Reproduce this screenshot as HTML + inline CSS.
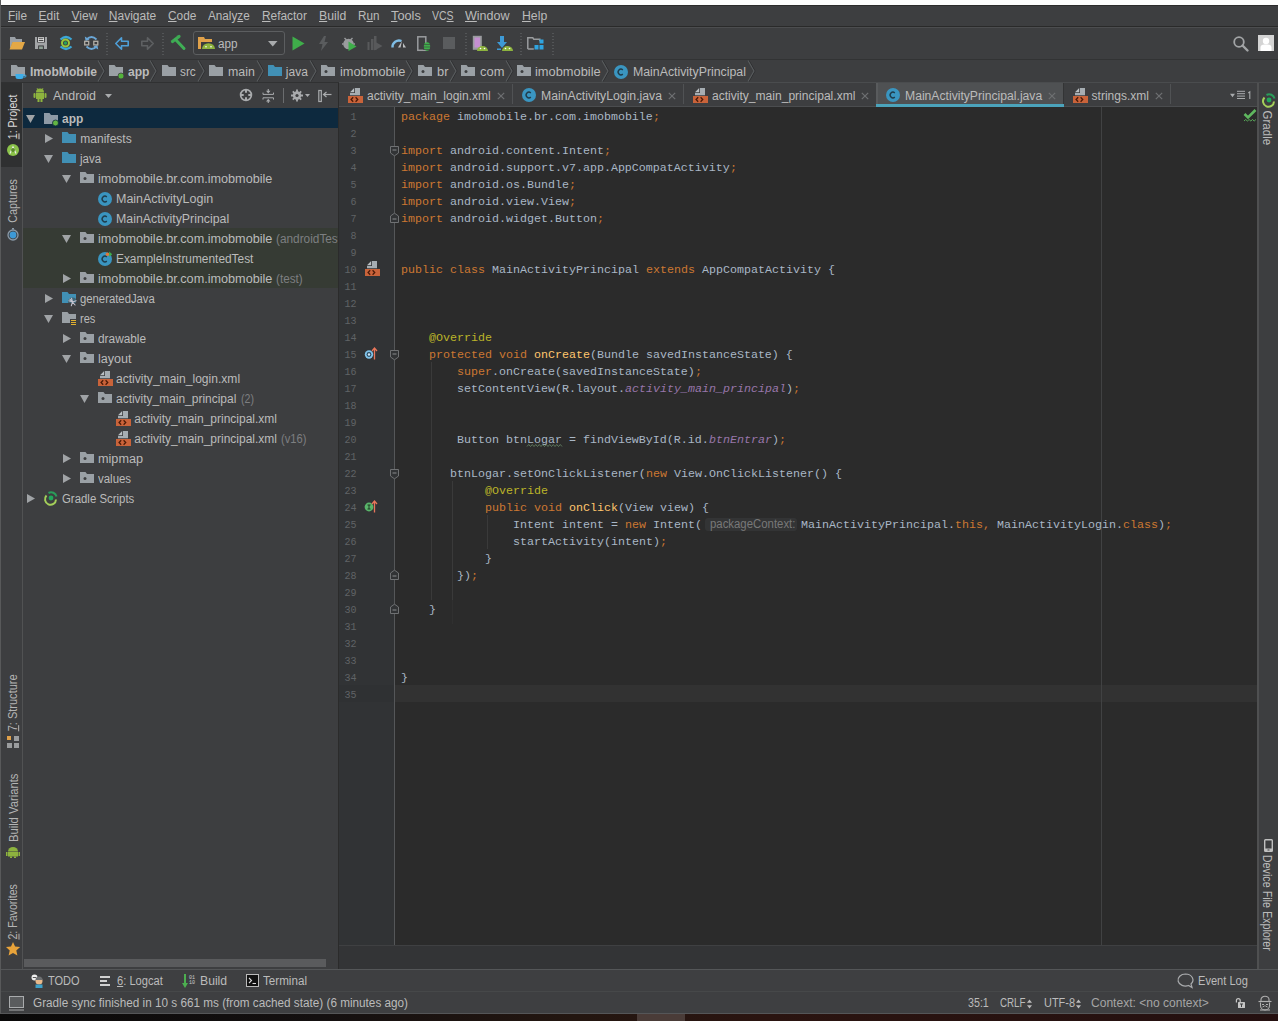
<!DOCTYPE html>
<html><head><meta charset="utf-8">
<style>
*{margin:0;padding:0;box-sizing:border-box}
html,body{width:1278px;height:1021px;overflow:hidden;background:#3d3e40;font-family:"Liberation Sans",sans-serif;color:#bbbbbb}
.a{position:absolute}
svg.a{overflow:visible}
u{text-decoration:underline;text-underline-offset:1px}
</style></head><body>
<div class="a" style="left:0px;top:0px;width:1278px;height:5px;background:#fdfdfd;"></div>
<div class="a" style="left:0px;top:5px;width:1278px;height:1px;background:#2b2b2b;"></div>
<div class="a" style="left:0px;top:6px;width:1278px;height:20px;background:#3d3e40;"></div>
<div class="a" style="left:0px;top:26px;width:1278px;height:1px;background:#2a2a2a;"></div>
<div class="a" style="left:0px;top:27px;width:1278px;height:1px;background:#4c4d4f;"></div>
<div class="a" style="left:0px;top:28px;width:1278px;height:30px;background:#3d3e40;"></div>
<div class="a" style="left:0px;top:59px;width:1278px;height:1px;background:#323334;"></div>
<div class="a" style="left:0px;top:60px;width:1278px;height:22px;background:#3d3e40;"></div>
<div class="a" style="left:0px;top:82px;width:339px;height:1px;background:#303132;"></div>
<div class="a" style="left:339px;top:82px;width:939px;height:1px;background:#4a4c4e;"></div>
<div class="a" style="left:1px;top:83px;width:21px;height:886px;background:#3d3e40;"></div>
<div class="a" style="left:1px;top:83px;width:21px;height:84px;background:#2f3031;"></div>
<div class="a" style="left:22px;top:83px;width:1px;height:886px;background:#515253;"></div>
<div class="a" style="left:23px;top:83px;width:315px;height:886px;background:#3d3e40;"></div>
<div class="a" style="left:338px;top:83px;width:1px;height:886px;background:#2b2b2b;"></div>
<div class="a" style="left:339px;top:83px;width:918px;height:24px;background:#3d3e40;"></div>
<div class="a" style="left:339px;top:107px;width:56px;height:838px;background:#313335;"></div>
<div class="a" style="left:395px;top:107px;width:862px;height:838px;background:#2b2b2b;"></div>
<div class="a" style="left:339px;top:946px;width:918px;height:23px;background:#333436;"></div>
<div class="a" style="left:339px;top:945px;width:918px;height:1px;background:#3f4042;"></div>
<div class="a" style="left:1257px;top:83px;width:2px;height:886px;background:#4f5051;"></div>
<div class="a" style="left:1259px;top:83px;width:19px;height:886px;background:#3d3e40;"></div>
<div class="a" style="left:0px;top:969px;width:1278px;height:1px;background:#545658;"></div>
<div class="a" style="left:0px;top:970px;width:1278px;height:21px;background:#3e3f41;"></div>
<div class="a" style="left:0px;top:991px;width:1278px;height:1px;background:#464849;"></div>
<div class="a" style="left:0px;top:992px;width:1278px;height:21px;background:#3e3f41;"></div>
<div class="a" style="left:0px;top:1013px;width:1278px;height:1px;background:#555658;"></div>
<div class="a" style="left:0;top:1014px;width:1278px;height:7px;background:linear-gradient(90deg,#0a0909 0%,#141010 25%,#231610 45%,#2a1410 60%,#241010 100%)"></div>
<div class="a" style="left:637px;top:1014px;width:48px;height:7px;background:#4a3c38;"></div>
<div class="a" style="left:0px;top:0px;width:1px;height:1014px;background:#58595a;"></div>
<div class="a" style="left:7.50px;top:9.84px;white-space:pre;font-family:'Liberation Sans';font-size:12px;line-height:12.0px;color:#bbbbbb;transform:scaleX(0.9822);transform-origin:0 0;"><u>F</u>ile</div>
<div class="a" style="left:38.60px;top:9.84px;white-space:pre;font-family:'Liberation Sans';font-size:12px;line-height:12.0px;color:#bbbbbb;"><u>E</u>dit</div>
<div class="a" style="left:71.50px;top:9.84px;white-space:pre;font-family:'Liberation Sans';font-size:12px;line-height:12.0px;color:#bbbbbb;"><u>V</u>iew</div>
<div class="a" style="left:108.80px;top:9.84px;white-space:pre;font-family:'Liberation Sans';font-size:12px;line-height:12.0px;color:#bbbbbb;"><u>N</u>avigate</div>
<div class="a" style="left:167.90px;top:9.84px;white-space:pre;font-family:'Liberation Sans';font-size:12px;line-height:12.0px;color:#bbbbbb;transform:scaleX(0.9900);transform-origin:0 0;"><u>C</u>ode</div>
<div class="a" style="left:208.30px;top:9.84px;white-space:pre;font-family:'Liberation Sans';font-size:12px;line-height:12.0px;color:#bbbbbb;transform:scaleX(0.9765);transform-origin:0 0;">Analy<u>z</u>e</div>
<div class="a" style="left:261.70px;top:9.84px;white-space:pre;font-family:'Liberation Sans';font-size:12px;line-height:12.0px;color:#bbbbbb;transform:scaleX(0.9899);transform-origin:0 0;"><u>R</u>efactor</div>
<div class="a" style="left:318.70px;top:9.84px;white-space:pre;font-family:'Liberation Sans';font-size:12px;line-height:12.0px;color:#bbbbbb;transform:scaleX(1.0192);transform-origin:0 0;"><u>B</u>uild</div>
<div class="a" style="left:357.70px;top:9.84px;white-space:pre;font-family:'Liberation Sans';font-size:12px;line-height:12.0px;color:#bbbbbb;transform:scaleX(0.9720);transform-origin:0 0;">R<u>u</u>n</div>
<div class="a" style="left:390.50px;top:9.84px;white-space:pre;font-family:'Liberation Sans';font-size:12px;line-height:12.0px;color:#bbbbbb;transform:scaleX(1.0637);transform-origin:0 0;"><u>T</u>ools</div>
<div class="a" style="left:431.70px;top:9.84px;white-space:pre;font-family:'Liberation Sans';font-size:12px;line-height:12.0px;color:#bbbbbb;transform:scaleX(0.8749);transform-origin:0 0;">VC<u>S</u></div>
<div class="a" style="left:464.50px;top:9.84px;white-space:pre;font-family:'Liberation Sans';font-size:12px;line-height:12.0px;color:#bbbbbb;transform:scaleX(1.0448);transform-origin:0 0;"><u>W</u>indow</div>
<div class="a" style="left:521.50px;top:9.84px;white-space:pre;font-family:'Liberation Sans';font-size:12px;line-height:12.0px;color:#bbbbbb;transform:scaleX(1.0208);transform-origin:0 0;"><u>H</u>elp</div>
<svg class="a" style="left:9px;top:37px" width="16" height="13" viewBox="0 0 16 13"><path d="M1 0h5l1 2h6v3H4L1 12z" fill="#9aa0a6"/><path d="M3.5 5H16l-3 7.5H0.5z" fill="#e3a846"/></svg>
<svg class="a" style="left:35px;top:37px" width="12" height="12" viewBox="0 0 12 12"><rect width="12" height="12" fill="#a3a5a7"/><rect x="2.2" y="-0.3" width="7.6" height="5.8" fill="#2e2f31"/><rect x="3" y="0.3" width="6" height="4.5" fill="#f4f4f4"/><rect x="3.6" y="1.3" width="4.8" height="0.9" fill="#333"/><rect x="3.6" y="3" width="4.8" height="0.9" fill="#333"/><rect x="3.2" y="8.5" width="5.6" height="3.5" fill="#2e2f31"/><rect x="4.1" y="9.4" width="3.8" height="2.6" fill="#8fa096"/></svg>
<svg class="a" style="left:59px;top:35px" width="14" height="16" viewBox="0 0 14 16"><path d="M1.5 4.5Q7 -0.5 12.5 4.5" stroke="#3ba7d8" stroke-width="2.2" fill="none"/><path d="M1.5 11.5Q7 16.5 12.5 11.5" stroke="#3ba7d8" stroke-width="2.2" fill="none"/><circle cx="6.5" cy="8" r="3.5" stroke="#9cc53a" stroke-width="2" fill="none"/><circle cx="6.5" cy="8" r="1.7" fill="#27a35a"/></svg>
<svg class="a" style="left:84px;top:35px" width="15" height="16" viewBox="0 0 15 16"><path d="M2.5 4.5Q7.5 -0.5 12.5 4.5" stroke="#6aa6d6" stroke-width="1.8" fill="none"/><path d="M0.8 1.5l0.8 4.5 4-1.5z" fill="#6aa6d6"/><path d="M2.5 11.5Q7.5 16.5 12.5 11.5" stroke="#6aa6d6" stroke-width="1.8" fill="none"/><path d="M14.2 14.5l-0.8-4.5-4 1.5z" fill="#6aa6d6"/><rect x="0.7" y="6.3" width="4" height="3.6" fill="#3d3e40" stroke="#b3afa8" stroke-width="1.3"/><rect x="9.8" y="6.3" width="4" height="3.6" fill="#3d3e40" stroke="#b3afa8" stroke-width="1.3"/></svg>
<svg class="a" style="left:106px;top:33px" width="2" height="22" viewBox="0 0 2 22"><rect x="0.5" y="0" width="1" height="1" fill="#6b6d6f"/><rect x="0.5" y="3" width="1" height="1" fill="#6b6d6f"/><rect x="0.5" y="6" width="1" height="1" fill="#6b6d6f"/><rect x="0.5" y="9" width="1" height="1" fill="#6b6d6f"/><rect x="0.5" y="12" width="1" height="1" fill="#6b6d6f"/><rect x="0.5" y="15" width="1" height="1" fill="#6b6d6f"/><rect x="0.5" y="18" width="1" height="1" fill="#6b6d6f"/><rect x="0.5" y="21" width="1" height="1" fill="#6b6d6f"/></svg>
<svg class="a" style="left:162px;top:33px" width="2" height="22" viewBox="0 0 2 22"><rect x="0.5" y="0" width="1" height="1" fill="#6b6d6f"/><rect x="0.5" y="3" width="1" height="1" fill="#6b6d6f"/><rect x="0.5" y="6" width="1" height="1" fill="#6b6d6f"/><rect x="0.5" y="9" width="1" height="1" fill="#6b6d6f"/><rect x="0.5" y="12" width="1" height="1" fill="#6b6d6f"/><rect x="0.5" y="15" width="1" height="1" fill="#6b6d6f"/><rect x="0.5" y="18" width="1" height="1" fill="#6b6d6f"/><rect x="0.5" y="21" width="1" height="1" fill="#6b6d6f"/></svg>
<svg class="a" style="left:465px;top:33px" width="2" height="22" viewBox="0 0 2 22"><rect x="0.5" y="0" width="1" height="1" fill="#6b6d6f"/><rect x="0.5" y="3" width="1" height="1" fill="#6b6d6f"/><rect x="0.5" y="6" width="1" height="1" fill="#6b6d6f"/><rect x="0.5" y="9" width="1" height="1" fill="#6b6d6f"/><rect x="0.5" y="12" width="1" height="1" fill="#6b6d6f"/><rect x="0.5" y="15" width="1" height="1" fill="#6b6d6f"/><rect x="0.5" y="18" width="1" height="1" fill="#6b6d6f"/><rect x="0.5" y="21" width="1" height="1" fill="#6b6d6f"/></svg>
<svg class="a" style="left:520px;top:33px" width="2" height="22" viewBox="0 0 2 22"><rect x="0.5" y="0" width="1" height="1" fill="#6b6d6f"/><rect x="0.5" y="3" width="1" height="1" fill="#6b6d6f"/><rect x="0.5" y="6" width="1" height="1" fill="#6b6d6f"/><rect x="0.5" y="9" width="1" height="1" fill="#6b6d6f"/><rect x="0.5" y="12" width="1" height="1" fill="#6b6d6f"/><rect x="0.5" y="15" width="1" height="1" fill="#6b6d6f"/><rect x="0.5" y="18" width="1" height="1" fill="#6b6d6f"/><rect x="0.5" y="21" width="1" height="1" fill="#6b6d6f"/></svg>
<svg class="a" style="left:552px;top:33px" width="2" height="22" viewBox="0 0 2 22"><rect x="0.5" y="0" width="1" height="1" fill="#6b6d6f"/><rect x="0.5" y="3" width="1" height="1" fill="#6b6d6f"/><rect x="0.5" y="6" width="1" height="1" fill="#6b6d6f"/><rect x="0.5" y="9" width="1" height="1" fill="#6b6d6f"/><rect x="0.5" y="12" width="1" height="1" fill="#6b6d6f"/><rect x="0.5" y="15" width="1" height="1" fill="#6b6d6f"/><rect x="0.5" y="18" width="1" height="1" fill="#6b6d6f"/><rect x="0.5" y="21" width="1" height="1" fill="#6b6d6f"/></svg>
<svg class="a" style="left:115px;top:37px" width="14" height="13" viewBox="0 0 14 13"><path d="M0.8 6.5L6.5 0.8v3.4h6.7v4.6H6.5v3.4z" fill="none" stroke="#4e9fd8" stroke-width="1.6" stroke-linejoin="round"/></svg>
<svg class="a" style="left:141px;top:37px" width="13" height="13" viewBox="0 0 13 13"><path d="M12.2 6.5L6.5 0.8v3.4H0.8v4.6h5.7v3.4z" fill="none" stroke="#5e6062" stroke-width="1.6" stroke-linejoin="round"/></svg>
<svg class="a" style="left:168px;top:34px" width="20" height="18" viewBox="0 0 20 18"><path d="M4.5 7.5L11 2.5" stroke="#3da953" stroke-width="3.2" stroke-linecap="round"/><path d="M7.5 5.5L16 14.5" stroke="#3fae55" stroke-width="3" stroke-linecap="round"/></svg>
<div class="a" style="left:193px;top:31px;width:92px;height:24px;border:1px solid #5c5e60;border-radius:3px;background:#3b3c3e"></div>
<svg class="a" style="left:198px;top:37px" width="18" height="13" viewBox="0 0 18 13"><path d="M0 0h6l1 2h7v3H2v7H0z" fill="#e0a14a"/><rect x="1.5" y="3" width="1.5" height="9" fill="#e0a14a"/><path d="M4 12a5 4.5 0 0 1 13 0z" fill="#8db33e"/><circle cx="8" cy="9.8" r="0.8" fill="#fff"/><circle cx="13" cy="9.8" r="0.8" fill="#fff"/></svg>
<div class="a" style="left:217.80px;top:37.84px;white-space:pre;font-family:'Liberation Sans';font-size:12px;line-height:12.0px;color:#bbbbbb;transform:scaleX(0.9735);transform-origin:0 0;">app</div>
<svg class="a" style="left:268px;top:41px" width="10" height="6" viewBox="0 0 10 6"><path d="M0 0h9.5L4.75 5.5z" fill="#a9abad"/></svg>
<svg class="a" style="left:292px;top:36px" width="13" height="15" viewBox="0 0 13 15"><path d="M0.5 0.5L12.5 7.5 0.5 14.5z" fill="#3fae4a"/></svg>
<svg class="a" style="left:319px;top:36px" width="9" height="15" viewBox="0 0 9 15"><path d="M5 0L0 8h3.5L2 15 9 6H5.5L7 0z" fill="#5a5c5e"/></svg>
<svg class="a" style="left:342px;top:36px" width="15" height="15" viewBox="0 0 15 15"><circle cx="6.5" cy="8" r="5.3" fill="#9a9c9e"/><path d="M2.5 2l2 2M10.5 2l-2 2M0 8h1.5M11.5 8h1.5" stroke="#9a9c9e" stroke-width="1.4"/><path d="M6.5 5.5L14.5 10.5 6.5 15z" fill="#3fae4a"/></svg>
<svg class="a" style="left:367px;top:36px" width="16" height="15" viewBox="0 0 16 15"><rect x="0.5" y="6" width="2" height="8" fill="#58595b"/><rect x="4" y="3" width="2.5" height="11" fill="#58595b"/><rect x="7" y="0" width="2.5" height="14" fill="#58595b"/><path d="M7.5 5.5L15.5 10 7.5 14.5z" fill="#58595b"/></svg>
<svg class="a" style="left:391px;top:38px" width="16" height="10" viewBox="0 0 16 10"><path d="M1.5 9.5a6.5 6.5 0 0 1 9-6.5" stroke="#7fbde5" stroke-width="2.4" fill="none"/><path d="M7 9.5L11 3l-1.5 6.5z" fill="#bdbfc1"/><path d="M12 5l3 4.5h-3z" fill="#bdbfc1"/></svg>
<svg class="a" style="left:417px;top:36px" width="14" height="15" viewBox="0 0 14 15"><rect x="0.8" y="0.8" width="8" height="13.5" fill="none" stroke="#9a9c9e" stroke-width="1.5"/><ellipse cx="10" cy="10.5" rx="3.2" ry="4.2" fill="#3fae4a"/><path d="M6 8.5h8M6 11h8M6 13.5h8" stroke="#3d3e40" stroke-width="0.6"/></svg>
<div class="a" style="left:443px;top:37px;width:12px;height:12px;background:#5a5c5e;"></div>
<svg class="a" style="left:472px;top:35px" width="16" height="16" viewBox="0 0 16 16"><rect x="0.8" y="0.8" width="9" height="14" fill="#9a9c9e"/><rect x="2.5" y="2.5" width="5.6" height="10" fill="#c48fd0"/><path d="M5 16a5.5 5 0 0 1 11 0z" fill="#8db33e"/><circle cx="8.5" cy="13.5" r="0.8" fill="#fff"/><circle cx="12.5" cy="13.5" r="0.8" fill="#fff"/></svg>
<svg class="a" style="left:497px;top:36px" width="16" height="15" viewBox="0 0 16 15"><rect x="3" y="0" width="4" height="7" fill="#3e9ad6"/><path d="M0 6h10L5 12z" fill="#3e9ad6"/><rect x="0" y="12.5" width="4" height="1.5" fill="#3e9ad6"/><path d="M5 15a5.5 5 0 0 1 11 0z" fill="#8db33e"/><circle cx="8.5" cy="12.5" r="0.8" fill="#fff"/><circle cx="12.5" cy="12.5" r="0.8" fill="#fff"/></svg>
<svg class="a" style="left:527px;top:37px" width="17" height="13" viewBox="0 0 17 13"><path d="M0.8 12V0.8h5l1 1.5h6v2" fill="none" stroke="#9a9c9e" stroke-width="1.5"/><path d="M0.8 12h6" stroke="#9a9c9e" stroke-width="1.5"/><rect x="12.5" y="2.5" width="4" height="4" fill="#2fa4e0"/><rect x="7.5" y="8" width="4" height="4.5" fill="#2fa4e0"/><rect x="12.5" y="8" width="4" height="4.5" fill="#2fa4e0"/></svg>
<svg class="a" style="left:1233px;top:36px" width="16" height="16" viewBox="0 0 16 16"><circle cx="6" cy="6" r="4.8" stroke="#a2a4a6" stroke-width="1.8" fill="none"/><path d="M9.5 9.5l5 5" stroke="#a2a4a6" stroke-width="2.4" stroke-linecap="round"/></svg>
<svg class="a" style="left:1258px;top:35px" width="16" height="16" viewBox="0 0 16 16"><rect width="16" height="16" fill="#d4d4d4"/><circle cx="8" cy="6" r="3.2" fill="#fff"/><path d="M2.5 16v-3.5a4 3 0 0 1 4-3h3a4 3 0 0 1 4 3V16z" fill="#fff"/></svg>
<svg class="a" style="left:11px;top:65px" width="16" height="14" viewBox="0 0 16 14"><path d="M0 0h5.5l1.5 2H14v9H0z" fill="#9aa0a5"/><path d="M4.5 9h8v2.5a2.5 2.5 0 0 1-2.5 2.5h-3a2.5 2.5 0 0 1-2.5-2.5z" fill="#3daee9"/><path d="M12.5 10h1.5a1 1 0 0 1 0 2h-1.5" stroke="#3daee9" stroke-width="1" fill="none"/></svg>
<div class="a" style="left:30.00px;top:66.34px;white-space:pre;font-family:'Liberation Sans';font-size:12px;line-height:12.0px;color:#bbbbbb;font-weight:bold;transform:scaleX(1.0064);transform-origin:0 0;">ImobMobile</div>
<svg class="a" style="left:97px;top:59px" width="9" height="24" viewBox="0 0 9 24"><path d="M2 1.5L8 12 2 22.5" stroke="#2c2d2f" stroke-width="1" fill="none"/><path d="M1 1.5L7 12 1 22.5" stroke="#595c5e" stroke-width="1.1" fill="none"/></svg>
<svg class="a" style="left:109px;top:65px" width="16" height="14" viewBox="0 0 16 14"><path d="M0 0h5.5l1.5 2H14V11H0z" fill="#9aa0a5"/><circle cx="12" cy="11" r="3" fill="#53b33a" stroke="#3d3e40" stroke-width="0.8"/></svg>
<div class="a" style="left:127.80px;top:66.34px;white-space:pre;font-family:'Liberation Sans';font-size:12px;line-height:12.0px;color:#bbbbbb;font-weight:bold;transform:scaleX(1.0073);transform-origin:0 0;">app</div>
<svg class="a" style="left:149px;top:59px" width="9" height="24" viewBox="0 0 9 24"><path d="M2 1.5L8 12 2 22.5" stroke="#2c2d2f" stroke-width="1" fill="none"/><path d="M1 1.5L7 12 1 22.5" stroke="#595c5e" stroke-width="1.1" fill="none"/></svg>
<svg class="a" style="left:162px;top:65px" width="14" height="11" viewBox="0 0 14 11"><path d="M0 0h5.5l1.5 2H14V11H0z" fill="#9aa0a5"/></svg>
<div class="a" style="left:180.30px;top:66.34px;white-space:pre;font-family:'Liberation Sans';font-size:12px;line-height:12.0px;color:#bbbbbb;transform:scaleX(0.9875);transform-origin:0 0;">src</div>
<svg class="a" style="left:197px;top:59px" width="9" height="24" viewBox="0 0 9 24"><path d="M2 1.5L8 12 2 22.5" stroke="#2c2d2f" stroke-width="1" fill="none"/><path d="M1 1.5L7 12 1 22.5" stroke="#595c5e" stroke-width="1.1" fill="none"/></svg>
<svg class="a" style="left:209px;top:65px" width="14" height="11" viewBox="0 0 14 11"><path d="M0 0h5.5l1.5 2H14V11H0z" fill="#9aa0a5"/></svg>
<div class="a" style="left:227.90px;top:66.34px;white-space:pre;font-family:'Liberation Sans';font-size:12px;line-height:12.0px;color:#bbbbbb;transform:scaleX(1.0302);transform-origin:0 0;">main</div>
<svg class="a" style="left:256px;top:59px" width="9" height="24" viewBox="0 0 9 24"><path d="M2 1.5L8 12 2 22.5" stroke="#2c2d2f" stroke-width="1" fill="none"/><path d="M1 1.5L7 12 1 22.5" stroke="#595c5e" stroke-width="1.1" fill="none"/></svg>
<svg class="a" style="left:268px;top:65px" width="14" height="11" viewBox="0 0 14 11"><path d="M0 0h5.5l1.5 2H14V11H0z" fill="#4190b5"/></svg>
<div class="a" style="left:285.80px;top:66.34px;white-space:pre;font-family:'Liberation Sans';font-size:12px;line-height:12.0px;color:#bbbbbb;">java</div>
<svg class="a" style="left:309px;top:59px" width="9" height="24" viewBox="0 0 9 24"><path d="M2 1.5L8 12 2 22.5" stroke="#2c2d2f" stroke-width="1" fill="none"/><path d="M1 1.5L7 12 1 22.5" stroke="#595c5e" stroke-width="1.1" fill="none"/></svg>
<svg class="a" style="left:321px;top:65px" width="14" height="11" viewBox="0 0 14 11"><path d="M0 0h5.5l1.5 2H14V11H0z" fill="#9aa0a5"/><circle cx="5" cy="6.5" r="1.5" fill="#3d3e40"/></svg>
<div class="a" style="left:339.70px;top:66.34px;white-space:pre;font-family:'Liberation Sans';font-size:12px;line-height:12.0px;color:#bbbbbb;transform:scaleX(1.0659);transform-origin:0 0;">imobmobile</div>
<svg class="a" style="left:405px;top:59px" width="9" height="24" viewBox="0 0 9 24"><path d="M2 1.5L8 12 2 22.5" stroke="#2c2d2f" stroke-width="1" fill="none"/><path d="M1 1.5L7 12 1 22.5" stroke="#595c5e" stroke-width="1.1" fill="none"/></svg>
<svg class="a" style="left:418px;top:65px" width="14" height="11" viewBox="0 0 14 11"><path d="M0 0h5.5l1.5 2H14V11H0z" fill="#9aa0a5"/><circle cx="5" cy="6.5" r="1.5" fill="#3d3e40"/></svg>
<div class="a" style="left:436.90px;top:66.34px;white-space:pre;font-family:'Liberation Sans';font-size:12px;line-height:12.0px;color:#bbbbbb;transform:scaleX(1.0682);transform-origin:0 0;">br</div>
<svg class="a" style="left:449px;top:59px" width="9" height="24" viewBox="0 0 9 24"><path d="M2 1.5L8 12 2 22.5" stroke="#2c2d2f" stroke-width="1" fill="none"/><path d="M1 1.5L7 12 1 22.5" stroke="#595c5e" stroke-width="1.1" fill="none"/></svg>
<svg class="a" style="left:461px;top:65px" width="14" height="11" viewBox="0 0 14 11"><path d="M0 0h5.5l1.5 2H14V11H0z" fill="#9aa0a5"/><circle cx="5" cy="6.5" r="1.5" fill="#3d3e40"/></svg>
<div class="a" style="left:479.70px;top:66.34px;white-space:pre;font-family:'Liberation Sans';font-size:12px;line-height:12.0px;color:#bbbbbb;transform:scaleX(1.0762);transform-origin:0 0;">com</div>
<svg class="a" style="left:505px;top:59px" width="9" height="24" viewBox="0 0 9 24"><path d="M2 1.5L8 12 2 22.5" stroke="#2c2d2f" stroke-width="1" fill="none"/><path d="M1 1.5L7 12 1 22.5" stroke="#595c5e" stroke-width="1.1" fill="none"/></svg>
<svg class="a" style="left:517px;top:65px" width="14" height="11" viewBox="0 0 14 11"><path d="M0 0h5.5l1.5 2H14V11H0z" fill="#9aa0a5"/><circle cx="5" cy="6.5" r="1.5" fill="#3d3e40"/></svg>
<div class="a" style="left:535.30px;top:66.34px;white-space:pre;font-family:'Liberation Sans';font-size:12px;line-height:12.0px;color:#bbbbbb;transform:scaleX(1.0707);transform-origin:0 0;">imobmobile</div>
<svg class="a" style="left:601px;top:59px" width="9" height="24" viewBox="0 0 9 24"><path d="M2 1.5L8 12 2 22.5" stroke="#2c2d2f" stroke-width="1" fill="none"/><path d="M1 1.5L7 12 1 22.5" stroke="#595c5e" stroke-width="1.1" fill="none"/></svg>
<svg class="a" style="left:614px;top:65px" width="14" height="14" viewBox="0 0 14 14"><circle cx="7.0" cy="7.0" r="7.0" fill="#3a95c0"/><path d="M8.82 4.8999999999999995a2.8000000000000003 2.8000000000000003 0 1 0 0 4.2" stroke="#1f3b4a" stroke-width="1.4" fill="none"/></svg>
<div class="a" style="left:632.90px;top:66.34px;white-space:pre;font-family:'Liberation Sans';font-size:12px;line-height:12.0px;color:#bbbbbb;transform:scaleX(1.0259);transform-origin:0 0;">MainActivityPrincipal</div>
<svg class="a" style="left:747px;top:59px" width="9" height="24" viewBox="0 0 9 24"><path d="M2 1.5L8 12 2 22.5" stroke="#2c2d2f" stroke-width="1" fill="none"/><path d="M1 1.5L7 12 1 22.5" stroke="#595c5e" stroke-width="1.1" fill="none"/></svg>
<div class="a" style="left:-12.05px;top:111.04px;width:50.70px;height:12.0px;white-space:pre;font-family:'Liberation Sans';font-size:12px;line-height:12.0px;color:#d8d8d8;transform-origin:25.35px 5.86px;transform:rotate(-90deg) scaleX(0.8836)"><u>1</u>: Project</div>
<svg class="a" style="left:7px;top:144px" width="12" height="12" viewBox="0 0 12 12"><circle cx="6" cy="6" r="6" fill="#8bc34a"/><path d="M3 9.5L6 3l3 6.5" stroke="#eee" stroke-width="1.2" fill="none"/><circle cx="6" cy="6" r="2" fill="#5a8a2a"/></svg>
<div class="a" style="left:-11.05px;top:195.14px;width:48.70px;height:12.0px;white-space:pre;font-family:'Liberation Sans';font-size:12px;line-height:12.0px;color:#b4b4b4;transform-origin:24.35px 5.86px;transform:rotate(-90deg) scaleX(0.8952)">Captures</div>
<svg class="a" style="left:7px;top:228px" width="12" height="13" viewBox="0 0 12 13"><circle cx="6" cy="7" r="5" fill="none" stroke="#8a9aa8" stroke-width="1.3"/><circle cx="6" cy="7" r="3.4" fill="#3d9ad8"/><rect x="5" y="0" width="2" height="1.5" fill="#8a9aa8"/></svg>
<div class="a" style="left:-17.72px;top:696.79px;width:62.03px;height:12.0px;white-space:pre;font-family:'Liberation Sans';font-size:12px;line-height:12.0px;color:#b4b4b4;transform-origin:31.02px 5.86px;transform:rotate(-90deg) scaleX(0.9173)"><u>7</u>: Structure</div>
<svg class="a" style="left:7px;top:736px" width="12" height="12" viewBox="0 0 12 12"><rect x="0" y="0" width="4" height="4" fill="#e0a14a"/><rect x="7" y="0" width="5" height="5" fill="#9a9c9e"/><rect x="0" y="7" width="5" height="5" fill="#9a9c9e"/><rect x="7" y="7" width="5" height="5" fill="#9a9c9e"/></svg>
<div class="a" style="left:-23.28px;top:801.69px;width:73.16px;height:12.0px;white-space:pre;font-family:'Liberation Sans';font-size:12px;line-height:12.0px;color:#b4b4b4;transform-origin:36.58px 5.86px;transform:rotate(-90deg) scaleX(0.9364)">Build Variants</div>
<svg class="a" style="left:6px;top:846px" width="14" height="13" viewBox="0 0 14 13"><path d="M2 5.5a5 4.5 0 0 1 10 0z" fill="#8db33e"/><rect x="2" y="6" width="10" height="4.5" fill="#8db33e"/><rect x="0" y="6" width="1.5" height="4" fill="#8db33e"/><rect x="12.5" y="6" width="1.5" height="4" fill="#8db33e"/><rect x="4" y="10.5" width="2" height="1.5" fill="#8db33e"/><rect x="8" y="10.5" width="2" height="1.5" fill="#8db33e"/></svg>
<div class="a" style="left:-18.05px;top:905.69px;width:62.70px;height:12.0px;white-space:pre;font-family:'Liberation Sans';font-size:12px;line-height:12.0px;color:#b4b4b4;transform-origin:31.35px 5.86px;transform:rotate(-90deg) scaleX(0.8851)"><u>2</u>: Favorites</div>
<svg class="a" style="left:6px;top:942px" width="14" height="14" viewBox="0 0 14 14"><path d="M7 0l2.1 4.6 5 .5-3.8 3.3 1.1 5L7 10.9 2.6 13.4l1.1-5L0 5.1l5-.5z" fill="#e8a33a"/></svg>
<svg class="a" style="left:1262px;top:93px" width="14" height="14" viewBox="0 0 14 14"><path d="M2.5 4.5a5.5 5.5 0 1 0 9.5 4" stroke="#a4cf5a" stroke-width="2" fill="none"/><path d="M4.5 2a5.5 5.5 0 0 1 8 3.5" stroke="#2a9d5a" stroke-width="2" fill="none"/><circle cx="7" cy="7" r="2.4" fill="#22a85a"/></svg>
<div class="a" style="left:1248.98px;top:121.54px;width:36.03px;height:12.0px;white-space:pre;font-family:'Liberation Sans';font-size:12px;line-height:12.0px;color:#bbbbbb;transform-origin:18.02px 5.86px;transform:rotate(90deg) scaleX(0.9603)">Gradle</div>
<svg class="a" style="left:1264px;top:839px" width="9" height="13" viewBox="0 0 9 13"><rect x="0.7" y="0.7" width="7.6" height="11.6" rx="0.8" fill="none" stroke="#c0c0c0" stroke-width="1.4"/><rect x="0.7" y="9.5" width="7.6" height="2.8" fill="#c0c0c0"/><rect x="3.5" y="10.5" width="2" height="1" fill="#3d3e40"/></svg>
<div class="a" style="left:1213.31px;top:896.64px;width:107.38px;height:12.0px;white-space:pre;font-family:'Liberation Sans';font-size:12px;line-height:12.0px;color:#bbbbbb;transform-origin:53.69px 5.86px;transform:rotate(90deg) scaleX(0.8941)">Device File Explorer</div>
<svg class="a" style="left:32px;top:87px" width="16" height="16" viewBox="0 0 16 16"><path d="M4 5.5a4 4 0 0 1 8 0z" fill="#8db33e"/><path d="M5 1l1 2M11 1l-1 2" stroke="#8db33e" stroke-width="0.8"/><rect x="4" y="6" width="8" height="6" fill="#8db33e"/><rect x="1.5" y="6" width="2" height="5" rx="1" fill="#8db33e"/><rect x="12.5" y="6" width="2" height="5" rx="1" fill="#8db33e"/><rect x="5.5" y="12" width="2" height="3" fill="#8db33e"/><rect x="8.5" y="12" width="2" height="3" fill="#8db33e"/></svg>
<div class="a" style="left:52.90px;top:89.84px;white-space:pre;font-family:'Liberation Sans';font-size:12px;line-height:12.0px;color:#bbbbbb;transform:scaleX(1.0369);transform-origin:0 0;">Android</div>
<svg class="a" style="left:105px;top:94px" width="7" height="4" viewBox="0 0 7 4"><path d="M0 0h7L3.5 4z" fill="#a9abad"/></svg>
<svg class="a" style="left:239px;top:88px" width="14" height="14" viewBox="0 0 14 14"><circle cx="7" cy="7" r="5.4" stroke="#a9abad" stroke-width="1.7" fill="none"/><path d="M7 1.5v3.2M7 9.3v3.2M1.5 7h3.2M9.3 7h3.2" stroke="#a9abad" stroke-width="2"/></svg>
<svg class="a" style="left:261.5px;top:88.5px" width="13" height="14" viewBox="0 0 13 14"><path d="M1 3.6v1.8h10.5V3.6M1 10.6V8.8h10.5v1.8" stroke="#a9abad" stroke-width="1" fill="none"/><path d="M6.25 0v2.5M6.25 11.5V14" stroke="#a9abad" stroke-width="1.1"/><path d="M4 1.8h4.5L6.25 4.6zM4 12.6h4.5L6.25 9.8z" fill="#a9abad"/></svg>
<div class="a" style="left:283px;top:88px;width:1px;height:15px;background:#6b6d6f;"></div>
<svg class="a" style="left:291px;top:89px" width="20" height="13" viewBox="0 0 20 13"><circle cx="6" cy="6.5" r="4.2" fill="#a9abad"/><path d="M6 0.5v12M0 6.5h12M1.8 2.3l8.4 8.4M10.2 2.3l-8.4 8.4" stroke="#a9abad" stroke-width="1.8"/><circle cx="6" cy="6.5" r="1.6" fill="#3d3e40"/><path d="M14 5h5l-2.5 3z" fill="#a9abad"/></svg>
<svg class="a" style="left:318px;top:90px" width="14" height="12" viewBox="0 0 14 12"><rect x="0.8" y="0.5" width="2.5" height="11" fill="none" stroke="#a9abad" stroke-width="1.2"/><path d="M6 4.5h7.5" stroke="#a9abad" stroke-width="1.2"/><path d="M8.5 2L5.5 4.5 8.5 7" stroke="#a9abad" stroke-width="1.2" fill="none"/></svg>
<div class="a" style="left:23px;top:108px;width:315px;height:20px;background:#0d293e;"></div>
<div class="a" style="left:23px;top:228px;width:315px;height:60px;background:#363b34;"></div>
<svg class="a" style="left:26px;top:115px" width="9" height="8" viewBox="0 0 9 8"><path d="M0 0h9L4.5 8z" fill="#a0a3a6"/></svg>
<svg class="a" style="left:44px;top:113px" width="16" height="14" viewBox="0 0 16 14"><path d="M0 0h5.5l1.5 2H14V11H0z" fill="#8e9aa6"/><circle cx="11.5" cy="10" r="3" fill="#62b543" stroke="#0d293e" stroke-width="0.8"/></svg>
<div class="a" style="left:62.30px;top:112.84px;white-space:pre;font-family:'Liberation Sans';font-size:12px;line-height:12.0px;color:#bbbbbb;font-weight:bold;transform:scaleX(0.9933);transform-origin:0 0;">app</div>
<svg class="a" style="left:45px;top:134px" width="8" height="9" viewBox="0 0 8 9"><path d="M0 0v9L8 4.5z" fill="#a0a3a6"/></svg>
<svg class="a" style="left:62px;top:132px" width="14" height="11" viewBox="0 0 14 11"><path d="M0 0h5.5l1.5 2H14v9H0z" fill="#4190b5"/></svg>
<div class="a" style="left:80.30px;top:132.84px;white-space:pre;font-family:'Liberation Sans';font-size:12px;line-height:12.0px;color:#bbbbbb;">manifests</div>
<svg class="a" style="left:44px;top:155px" width="9" height="8" viewBox="0 0 9 8"><path d="M0 0h9L4.5 8z" fill="#a0a3a6"/></svg>
<svg class="a" style="left:62px;top:152px" width="14" height="11" viewBox="0 0 14 11"><path d="M0 0h5.5l1.5 2H14v9H0z" fill="#4190b5"/></svg>
<div class="a" style="left:80.30px;top:152.84px;white-space:pre;font-family:'Liberation Sans';font-size:12px;line-height:12.0px;color:#bbbbbb;transform:scaleX(0.9584);transform-origin:0 0;">java</div>
<svg class="a" style="left:62px;top:175px" width="9" height="8" viewBox="0 0 9 8"><path d="M0 0h9L4.5 8z" fill="#a0a3a6"/></svg>
<svg class="a" style="left:80px;top:172px" width="14" height="11" viewBox="0 0 14 11"><path d="M0 0h5.5l1.5 2H14V11H0z" fill="#9aa0a5"/><circle cx="5" cy="6.5" r="1.5" fill="#3d3e40"/></svg>
<div class="a" style="left:98.30px;top:172.84px;white-space:pre;font-family:'Liberation Sans';font-size:12px;line-height:12.0px;color:#bbbbbb;transform:scaleX(1.0544);transform-origin:0 0;">imobmobile.br.com.imobmobile</div>
<svg class="a" style="left:98px;top:192px" width="14" height="14" viewBox="0 0 14 14"><circle cx="7.0" cy="7.0" r="7.0" fill="#3a95c0"/><path d="M8.82 4.8999999999999995a2.8000000000000003 2.8000000000000003 0 1 0 0 4.2" stroke="#1f3b4a" stroke-width="1.4" fill="none"/></svg>
<div class="a" style="left:116.30px;top:192.84px;white-space:pre;font-family:'Liberation Sans';font-size:12px;line-height:12.0px;color:#bbbbbb;transform:scaleX(1.0399);transform-origin:0 0;">MainActivityLogin</div>
<svg class="a" style="left:98px;top:212px" width="14" height="14" viewBox="0 0 14 14"><circle cx="7.0" cy="7.0" r="7.0" fill="#3a95c0"/><path d="M8.82 4.8999999999999995a2.8000000000000003 2.8000000000000003 0 1 0 0 4.2" stroke="#1f3b4a" stroke-width="1.4" fill="none"/></svg>
<div class="a" style="left:116.30px;top:212.84px;white-space:pre;font-family:'Liberation Sans';font-size:12px;line-height:12.0px;color:#bbbbbb;transform:scaleX(1.0287);transform-origin:0 0;">MainActivityPrincipal</div>
<svg class="a" style="left:62px;top:235px" width="9" height="8" viewBox="0 0 9 8"><path d="M0 0h9L4.5 8z" fill="#a0a3a6"/></svg>
<svg class="a" style="left:80px;top:232px" width="14" height="11" viewBox="0 0 14 11"><path d="M0 0h5.5l1.5 2H14V11H0z" fill="#9aa0a5"/><circle cx="5" cy="6.5" r="1.5" fill="#3d3e40"/></svg>
<div class="a" style="left:98.30px;top:232.84px;white-space:pre;font-family:'Liberation Sans';font-size:12px;line-height:12.0px;color:#bbbbbb;transform:scaleX(1.0544);transform-origin:0 0;">imobmobile.br.com.imobmobile</div>
<div class="a" style="left:276.00px;top:232.84px;white-space:pre;font-family:'Liberation Sans';font-size:12px;line-height:12.0px;color:#7d7f81;transform:scaleX(0.9853);transform-origin:0 0;">(androidTest)</div>
<svg class="a" style="left:98px;top:252px" width="14" height="14" viewBox="0 0 14 14"><circle cx="7.0" cy="7.0" r="7.0" fill="#3a95c0"/><path d="M8.82 4.8999999999999995a2.8000000000000003 2.8000000000000003 0 1 0 0 4.2" stroke="#1f3b4a" stroke-width="1.4" fill="none"/><circle cx="9.5" cy="2.2" r="1.8" fill="#e0783a"/><path d="M11.2 -0.5l3 2.8-3 2.8z" fill="#3fae4a"/></svg>
<div class="a" style="left:116.30px;top:252.84px;white-space:pre;font-family:'Liberation Sans';font-size:12px;line-height:12.0px;color:#bbbbbb;transform:scaleX(0.9904);transform-origin:0 0;">ExampleInstrumentedTest</div>
<svg class="a" style="left:63px;top:274px" width="8" height="9" viewBox="0 0 8 9"><path d="M0 0v9L8 4.5z" fill="#a0a3a6"/></svg>
<svg class="a" style="left:80px;top:272px" width="14" height="11" viewBox="0 0 14 11"><path d="M0 0h5.5l1.5 2H14V11H0z" fill="#9aa0a5"/><circle cx="5" cy="6.5" r="1.5" fill="#3d3e40"/></svg>
<div class="a" style="left:98.30px;top:272.84px;white-space:pre;font-family:'Liberation Sans';font-size:12px;line-height:12.0px;color:#bbbbbb;transform:scaleX(1.0544);transform-origin:0 0;">imobmobile.br.com.imobmobile</div>
<div class="a" style="left:275.90px;top:272.84px;white-space:pre;font-family:'Liberation Sans';font-size:12px;line-height:12.0px;color:#7d7f81;transform:scaleX(0.9765);transform-origin:0 0;">(test)</div>
<svg class="a" style="left:45px;top:294px" width="8" height="9" viewBox="0 0 8 9"><path d="M0 0v9L8 4.5z" fill="#a0a3a6"/></svg>
<svg class="a" style="left:62px;top:292px" width="16" height="15" viewBox="0 0 16 15"><path d="M0 0h5.5l1.5 2H14V11H0z" fill="#4190b5"/><circle cx="10.5" cy="10" r="4.6" fill="#3d3e40" opacity="0.55"/><path d="M10.5 10l-1-3.8M10.5 10l3.6-1.3M10.5 10l2.6 3M10.5 10l-1.2 3.8M10.5 10l-3.6-1.2M10.5 10l-2.6-2.8" stroke="#c4c4d0" stroke-width="1.1" stroke-linecap="round"/></svg>
<div class="a" style="left:80.30px;top:292.84px;white-space:pre;font-family:'Liberation Sans';font-size:12px;line-height:12.0px;color:#bbbbbb;transform:scaleX(0.9420);transform-origin:0 0;">generatedJava</div>
<svg class="a" style="left:44px;top:315px" width="9" height="8" viewBox="0 0 9 8"><path d="M0 0h9L4.5 8z" fill="#a0a3a6"/></svg>
<svg class="a" style="left:62px;top:312px" width="16" height="14" viewBox="0 0 16 14"><path d="M0 0h5.5l1.5 2H14v9H0z" fill="#9aa0a5"/><rect x="8" y="7" width="7" height="7" fill="#3d3e40"/><path d="M9 8.5h5M9 10.5h5M9 12.5h5" stroke="#e0b030" stroke-width="1"/></svg>
<div class="a" style="left:80.30px;top:312.84px;white-space:pre;font-family:'Liberation Sans';font-size:12px;line-height:12.0px;color:#bbbbbb;transform:scaleX(0.9237);transform-origin:0 0;">res</div>
<svg class="a" style="left:63px;top:334px" width="8" height="9" viewBox="0 0 8 9"><path d="M0 0v9L8 4.5z" fill="#a0a3a6"/></svg>
<svg class="a" style="left:80px;top:332px" width="14" height="11" viewBox="0 0 14 11"><path d="M0 0h5.5l1.5 2H14V11H0z" fill="#9aa0a5"/><circle cx="5" cy="6.5" r="1.5" fill="#3d3e40"/></svg>
<div class="a" style="left:98.30px;top:332.84px;white-space:pre;font-family:'Liberation Sans';font-size:12px;line-height:12.0px;color:#bbbbbb;transform:scaleX(0.9876);transform-origin:0 0;">drawable</div>
<svg class="a" style="left:62px;top:355px" width="9" height="8" viewBox="0 0 9 8"><path d="M0 0h9L4.5 8z" fill="#a0a3a6"/></svg>
<svg class="a" style="left:80px;top:352px" width="14" height="11" viewBox="0 0 14 11"><path d="M0 0h5.5l1.5 2H14V11H0z" fill="#9aa0a5"/><circle cx="5" cy="6.5" r="1.5" fill="#3d3e40"/></svg>
<div class="a" style="left:98.30px;top:352.84px;white-space:pre;font-family:'Liberation Sans';font-size:12px;line-height:12.0px;color:#bbbbbb;transform:scaleX(1.0459);transform-origin:0 0;">layout</div>
<svg class="a" style="left:98px;top:371px" width="16" height="15" viewBox="0 0 16 15"><path d="M7 0h5v7.2H2V5h5z" fill="#a6adb2"/><path d="M2 4.2L6.2 0v4.2z" fill="#b9bfc3"/><rect x="0" y="8" width="15" height="7" fill="#c9633a"/><path d="M5.2 9.3l-2.1 2.2 2.1 2.2M7.6 9.3l2.1 2.2-2.1 2.2" stroke="#4a1a08" stroke-width="1.3" fill="none"/></svg>
<div class="a" style="left:116.30px;top:372.84px;white-space:pre;font-family:'Liberation Sans';font-size:12px;line-height:12.0px;color:#bbbbbb;transform:scaleX(1.0057);transform-origin:0 0;">activity_main_login.xml</div>
<svg class="a" style="left:80px;top:395px" width="9" height="8" viewBox="0 0 9 8"><path d="M0 0h9L4.5 8z" fill="#a0a3a6"/></svg>
<svg class="a" style="left:98px;top:392px" width="14" height="11" viewBox="0 0 14 11"><path d="M0 0h5.5l1.5 2H14V11H0z" fill="#9aa0a5"/><circle cx="5" cy="6.5" r="1.5" fill="#3d3e40"/></svg>
<div class="a" style="left:116.30px;top:392.84px;white-space:pre;font-family:'Liberation Sans';font-size:12px;line-height:12.0px;color:#bbbbbb;transform:scaleX(0.9964);transform-origin:0 0;">activity_main_principal</div>
<div class="a" style="left:241.30px;top:392.84px;white-space:pre;font-family:'Liberation Sans';font-size:12px;line-height:12.0px;color:#7d7f81;transform:scaleX(0.8860);transform-origin:0 0;">(2)</div>
<svg class="a" style="left:116px;top:411px" width="16" height="15" viewBox="0 0 16 15"><path d="M7 0h5v7.2H2V5h5z" fill="#a6adb2"/><path d="M2 4.2L6.2 0v4.2z" fill="#b9bfc3"/><rect x="0" y="8" width="15" height="7" fill="#c9633a"/><path d="M5.2 9.3l-2.1 2.2 2.1 2.2M7.6 9.3l2.1 2.2-2.1 2.2" stroke="#4a1a08" stroke-width="1.3" fill="none"/></svg>
<div class="a" style="left:134.30px;top:412.84px;white-space:pre;font-family:'Liberation Sans';font-size:12px;line-height:12.0px;color:#bbbbbb;">activity_main_principal.xml</div>
<svg class="a" style="left:116px;top:431px" width="16" height="15" viewBox="0 0 16 15"><path d="M7 0h5v7.2H2V5h5z" fill="#a6adb2"/><path d="M2 4.2L6.2 0v4.2z" fill="#b9bfc3"/><rect x="0" y="8" width="15" height="7" fill="#c9633a"/><path d="M5.2 9.3l-2.1 2.2 2.1 2.2M7.6 9.3l2.1 2.2-2.1 2.2" stroke="#4a1a08" stroke-width="1.3" fill="none"/></svg>
<div class="a" style="left:134.30px;top:432.84px;white-space:pre;font-family:'Liberation Sans';font-size:12px;line-height:12.0px;color:#bbbbbb;">activity_main_principal.xml</div>
<div class="a" style="left:281.20px;top:432.84px;white-space:pre;font-family:'Liberation Sans';font-size:12px;line-height:12.0px;color:#7d7f81;transform:scaleX(0.9289);transform-origin:0 0;">(v16)</div>
<svg class="a" style="left:63px;top:454px" width="8" height="9" viewBox="0 0 8 9"><path d="M0 0v9L8 4.5z" fill="#a0a3a6"/></svg>
<svg class="a" style="left:80px;top:452px" width="14" height="11" viewBox="0 0 14 11"><path d="M0 0h5.5l1.5 2H14V11H0z" fill="#9aa0a5"/><circle cx="5" cy="6.5" r="1.5" fill="#3d3e40"/></svg>
<div class="a" style="left:98.30px;top:452.84px;white-space:pre;font-family:'Liberation Sans';font-size:12px;line-height:12.0px;color:#bbbbbb;transform:scaleX(1.0542);transform-origin:0 0;">mipmap</div>
<svg class="a" style="left:63px;top:474px" width="8" height="9" viewBox="0 0 8 9"><path d="M0 0v9L8 4.5z" fill="#a0a3a6"/></svg>
<svg class="a" style="left:80px;top:472px" width="14" height="11" viewBox="0 0 14 11"><path d="M0 0h5.5l1.5 2H14V11H0z" fill="#9aa0a5"/><circle cx="5" cy="6.5" r="1.5" fill="#3d3e40"/></svg>
<div class="a" style="left:98.30px;top:472.84px;white-space:pre;font-family:'Liberation Sans';font-size:12px;line-height:12.0px;color:#bbbbbb;transform:scaleX(0.9542);transform-origin:0 0;">values</div>
<svg class="a" style="left:27px;top:494px" width="8" height="9" viewBox="0 0 8 9"><path d="M0 0v9L8 4.5z" fill="#a0a3a6"/></svg>
<svg class="a" style="left:44px;top:491px" width="14" height="14" viewBox="0 0 14 14"><path d="M2.5 4.5a5.5 5.5 0 1 0 9.5 4" stroke="#a4cf5a" stroke-width="2" fill="none"/><path d="M4.5 2a5.5 5.5 0 0 1 8 3.5" stroke="#2a9d5a" stroke-width="2" fill="none"/><circle cx="7" cy="7" r="2.4" fill="#22a85a"/></svg>
<div class="a" style="left:62.30px;top:492.84px;white-space:pre;font-family:'Liberation Sans';font-size:12px;line-height:12.0px;color:#bbbbbb;transform:scaleX(0.9503);transform-origin:0 0;">Gradle Scripts</div>
<div class="a" style="left:24px;top:959px;width:302px;height:8px;background:#5a5b5d;"></div>
<div class="a" style="left:338px;top:228px;width:1px;height:20px;background:#2b2b2b;"></div>
<div class="a" style="left:339px;top:228px;width:56px;height:20px;background:#313335;"></div>
<div class="a" style="left:876px;top:83px;width:188px;height:21px;background:#4f5153;"></div>
<div class="a" style="left:876px;top:83px;width:2px;height:21px;background:#595b5d;"></div>
<div class="a" style="left:876px;top:104px;width:188px;height:3px;background:#4ba3bb;"></div>
<div class="a" style="left:512px;top:84px;width:1px;height:20px;background:#505254;"></div>
<div class="a" style="left:683px;top:84px;width:1px;height:20px;background:#505254;"></div>
<div class="a" style="left:1170px;top:84px;width:1px;height:20px;background:#505254;"></div>
<div class="a" style="left:1063px;top:83px;width:1px;height:21px;background:#333435;"></div>
<div class="a" style="left:339px;top:106px;width:537px;height:1px;background:#4b4d4f;"></div>
<div class="a" style="left:1064px;top:106px;width:193px;height:1px;background:#4b4d4f;"></div>
<svg class="a" style="left:348px;top:88px" width="16" height="15" viewBox="0 0 16 15"><path d="M7 0h5v7.2H2V5h5z" fill="#a6adb2"/><path d="M2 4.2L6.2 0v4.2z" fill="#b9bfc3"/><rect x="0" y="8" width="15" height="7" fill="#c9633a"/><path d="M5.2 9.3l-2.1 2.2 2.1 2.2M7.6 9.3l2.1 2.2-2.1 2.2" stroke="#4a1a08" stroke-width="1.3" fill="none"/></svg>
<div class="a" style="left:367.30px;top:90.04px;white-space:pre;font-family:'Liberation Sans';font-size:12px;line-height:12.0px;color:#bbbbbb;transform:scaleX(1.0033);transform-origin:0 0;">activity_main_login.xml</div>
<svg class="a" style="left:497px;top:91.5px" width="8" height="8" viewBox="0 0 8 8"><path d="M0.8 0.8l6.4 6.4M7.2 0.8l-6.4 6.4" stroke="#6e7072" stroke-width="1.2"/></svg>
<svg class="a" style="left:522px;top:88px" width="14" height="14" viewBox="0 0 14 14"><circle cx="7.0" cy="7.0" r="7.0" fill="#3a95c0"/><path d="M8.82 4.8999999999999995a2.8000000000000003 2.8000000000000003 0 1 0 0 4.2" stroke="#1f3b4a" stroke-width="1.4" fill="none"/></svg>
<div class="a" style="left:540.80px;top:90.04px;white-space:pre;font-family:'Liberation Sans';font-size:12px;line-height:12.0px;color:#bbbbbb;transform:scaleX(1.0191);transform-origin:0 0;">MainActivityLogin.java</div>
<svg class="a" style="left:668px;top:91.5px" width="8" height="8" viewBox="0 0 8 8"><path d="M0.8 0.8l6.4 6.4M7.2 0.8l-6.4 6.4" stroke="#6e7072" stroke-width="1.2"/></svg>
<svg class="a" style="left:693px;top:88px" width="16" height="15" viewBox="0 0 16 15"><path d="M7 0h5v7.2H2V5h5z" fill="#a6adb2"/><path d="M2 4.2L6.2 0v4.2z" fill="#b9bfc3"/><rect x="0" y="8" width="15" height="7" fill="#c9633a"/><path d="M5.2 9.3l-2.1 2.2 2.1 2.2M7.6 9.3l2.1 2.2-2.1 2.2" stroke="#4a1a08" stroke-width="1.3" fill="none"/></svg>
<div class="a" style="left:711.60px;top:90.04px;white-space:pre;font-family:'Liberation Sans';font-size:12px;line-height:12.0px;color:#bbbbbb;transform:scaleX(1.0048);transform-origin:0 0;">activity_main_principal.xml</div>
<svg class="a" style="left:861px;top:91.5px" width="8" height="8" viewBox="0 0 8 8"><path d="M0.8 0.8l6.4 6.4M7.2 0.8l-6.4 6.4" stroke="#6e7072" stroke-width="1.2"/></svg>
<svg class="a" style="left:886px;top:88px" width="14" height="14" viewBox="0 0 14 14"><circle cx="7.0" cy="7.0" r="7.0" fill="#3a95c0"/><path d="M8.82 4.8999999999999995a2.8000000000000003 2.8000000000000003 0 1 0 0 4.2" stroke="#1f3b4a" stroke-width="1.4" fill="none"/></svg>
<div class="a" style="left:904.70px;top:90.04px;white-space:pre;font-family:'Liberation Sans';font-size:12px;line-height:12.0px;color:#bbbbbb;transform:scaleX(1.0134);transform-origin:0 0;">MainActivityPrincipal.java</div>
<svg class="a" style="left:1048px;top:91.5px" width="8" height="8" viewBox="0 0 8 8"><path d="M0.8 0.8l6.4 6.4M7.2 0.8l-6.4 6.4" stroke="#6e7072" stroke-width="1.2"/></svg>
<svg class="a" style="left:1073px;top:88px" width="16" height="15" viewBox="0 0 16 15"><path d="M7 0h5v7.2H2V5h5z" fill="#a6adb2"/><path d="M2 4.2L6.2 0v4.2z" fill="#b9bfc3"/><rect x="0" y="8" width="15" height="7" fill="#c9633a"/><path d="M5.2 9.3l-2.1 2.2 2.1 2.2M7.6 9.3l2.1 2.2-2.1 2.2" stroke="#4a1a08" stroke-width="1.3" fill="none"/></svg>
<div class="a" style="left:1091.60px;top:90.04px;white-space:pre;font-family:'Liberation Sans';font-size:12px;line-height:12.0px;color:#bbbbbb;">strings.xml</div>
<svg class="a" style="left:1155px;top:91.5px" width="8" height="8" viewBox="0 0 8 8"><path d="M0.8 0.8l6.4 6.4M7.2 0.8l-6.4 6.4" stroke="#6e7072" stroke-width="1.2"/></svg>
<svg class="a" style="left:1229px;top:90px" width="23" height="9" viewBox="0 0 23 9"><path d="M1 3.7h5l-2.5 3.5z" fill="#a9abad"/><path d="M8 1.3h8M8 3.7h8M8 6.1h8M8 8.5h8" stroke="#a9abad" stroke-width="1"/><path d="M19.3 3l1.5-1.2v7.2" stroke="#a9abad" stroke-width="1.1" fill="none"/></svg>
<div class="a" style="left:395px;top:685px;width:862px;height:17px;background:#323232;"></div>
<div class="a" style="left:339px;top:685px;width:55px;height:17px;background:#2f3133;"></div>
<div class="a" style="left:394px;top:107px;width:1px;height:838px;background:#555759;"></div>
<div class="a" style="left:1101px;top:107px;width:1px;height:838px;background:#414243;"></div>
<div class="a" style="left:350.60px;top:113.33px;white-space:pre;font-family:'Liberation Mono';font-size:10px;line-height:10.0px;color:#606366;">1</div>
<div class="a" style="left:350.60px;top:130.34px;white-space:pre;font-family:'Liberation Mono';font-size:10px;line-height:10.0px;color:#606366;">2</div>
<div class="a" style="left:350.60px;top:147.34px;white-space:pre;font-family:'Liberation Mono';font-size:10px;line-height:10.0px;color:#606366;">3</div>
<div class="a" style="left:350.60px;top:164.34px;white-space:pre;font-family:'Liberation Mono';font-size:10px;line-height:10.0px;color:#606366;">4</div>
<div class="a" style="left:350.60px;top:181.34px;white-space:pre;font-family:'Liberation Mono';font-size:10px;line-height:10.0px;color:#606366;">5</div>
<div class="a" style="left:350.60px;top:198.34px;white-space:pre;font-family:'Liberation Mono';font-size:10px;line-height:10.0px;color:#606366;">6</div>
<div class="a" style="left:350.60px;top:215.34px;white-space:pre;font-family:'Liberation Mono';font-size:10px;line-height:10.0px;color:#606366;">7</div>
<div class="a" style="left:350.60px;top:232.34px;white-space:pre;font-family:'Liberation Mono';font-size:10px;line-height:10.0px;color:#606366;">8</div>
<div class="a" style="left:350.60px;top:249.34px;white-space:pre;font-family:'Liberation Mono';font-size:10px;line-height:10.0px;color:#606366;">9</div>
<div class="a" style="left:344.60px;top:266.33px;white-space:pre;font-family:'Liberation Mono';font-size:10px;line-height:10.0px;color:#606366;">10</div>
<div class="a" style="left:344.60px;top:283.33px;white-space:pre;font-family:'Liberation Mono';font-size:10px;line-height:10.0px;color:#606366;">11</div>
<div class="a" style="left:344.60px;top:300.33px;white-space:pre;font-family:'Liberation Mono';font-size:10px;line-height:10.0px;color:#606366;">12</div>
<div class="a" style="left:344.60px;top:317.33px;white-space:pre;font-family:'Liberation Mono';font-size:10px;line-height:10.0px;color:#606366;">13</div>
<div class="a" style="left:344.60px;top:334.33px;white-space:pre;font-family:'Liberation Mono';font-size:10px;line-height:10.0px;color:#606366;">14</div>
<div class="a" style="left:344.60px;top:351.33px;white-space:pre;font-family:'Liberation Mono';font-size:10px;line-height:10.0px;color:#606366;">15</div>
<div class="a" style="left:344.60px;top:368.33px;white-space:pre;font-family:'Liberation Mono';font-size:10px;line-height:10.0px;color:#606366;">16</div>
<div class="a" style="left:344.60px;top:385.33px;white-space:pre;font-family:'Liberation Mono';font-size:10px;line-height:10.0px;color:#606366;">17</div>
<div class="a" style="left:344.60px;top:402.33px;white-space:pre;font-family:'Liberation Mono';font-size:10px;line-height:10.0px;color:#606366;">18</div>
<div class="a" style="left:344.60px;top:419.33px;white-space:pre;font-family:'Liberation Mono';font-size:10px;line-height:10.0px;color:#606366;">19</div>
<div class="a" style="left:344.60px;top:436.33px;white-space:pre;font-family:'Liberation Mono';font-size:10px;line-height:10.0px;color:#606366;">20</div>
<div class="a" style="left:344.60px;top:453.33px;white-space:pre;font-family:'Liberation Mono';font-size:10px;line-height:10.0px;color:#606366;">21</div>
<div class="a" style="left:344.60px;top:470.33px;white-space:pre;font-family:'Liberation Mono';font-size:10px;line-height:10.0px;color:#606366;">22</div>
<div class="a" style="left:344.60px;top:487.33px;white-space:pre;font-family:'Liberation Mono';font-size:10px;line-height:10.0px;color:#606366;">23</div>
<div class="a" style="left:344.60px;top:504.33px;white-space:pre;font-family:'Liberation Mono';font-size:10px;line-height:10.0px;color:#606366;">24</div>
<div class="a" style="left:344.60px;top:521.34px;white-space:pre;font-family:'Liberation Mono';font-size:10px;line-height:10.0px;color:#606366;">25</div>
<div class="a" style="left:344.60px;top:538.34px;white-space:pre;font-family:'Liberation Mono';font-size:10px;line-height:10.0px;color:#606366;">26</div>
<div class="a" style="left:344.60px;top:555.34px;white-space:pre;font-family:'Liberation Mono';font-size:10px;line-height:10.0px;color:#606366;">27</div>
<div class="a" style="left:344.60px;top:572.34px;white-space:pre;font-family:'Liberation Mono';font-size:10px;line-height:10.0px;color:#606366;">28</div>
<div class="a" style="left:344.60px;top:589.34px;white-space:pre;font-family:'Liberation Mono';font-size:10px;line-height:10.0px;color:#606366;">29</div>
<div class="a" style="left:344.60px;top:606.34px;white-space:pre;font-family:'Liberation Mono';font-size:10px;line-height:10.0px;color:#606366;">30</div>
<div class="a" style="left:344.60px;top:623.34px;white-space:pre;font-family:'Liberation Mono';font-size:10px;line-height:10.0px;color:#606366;">31</div>
<div class="a" style="left:344.60px;top:640.34px;white-space:pre;font-family:'Liberation Mono';font-size:10px;line-height:10.0px;color:#606366;">32</div>
<div class="a" style="left:344.60px;top:657.34px;white-space:pre;font-family:'Liberation Mono';font-size:10px;line-height:10.0px;color:#606366;">33</div>
<div class="a" style="left:344.60px;top:674.34px;white-space:pre;font-family:'Liberation Mono';font-size:10px;line-height:10.0px;color:#606366;">34</div>
<div class="a" style="left:344.60px;top:691.34px;white-space:pre;font-family:'Liberation Mono';font-size:10px;line-height:10.0px;color:#606366;">35</div>
<div class="a" style="left:401.00px;top:112.05px;white-space:pre;font-family:'Liberation Mono';font-size:11.67px;line-height:11.67px;color:#cc7832;">package </div>
<div class="a" style="left:457.00px;top:112.05px;white-space:pre;font-family:'Liberation Mono';font-size:11.67px;line-height:11.67px;color:#a9b7c6;">imobmobile.br.com.imobmobile</div>
<div class="a" style="left:653.00px;top:112.05px;white-space:pre;font-family:'Liberation Mono';font-size:11.67px;line-height:11.67px;color:#cc7832;">;</div>
<div class="a" style="left:401.00px;top:146.05px;white-space:pre;font-family:'Liberation Mono';font-size:11.67px;line-height:11.67px;color:#cc7832;">import </div>
<div class="a" style="left:450.00px;top:146.05px;white-space:pre;font-family:'Liberation Mono';font-size:11.67px;line-height:11.67px;color:#a9b7c6;">android.content.Intent</div>
<div class="a" style="left:604.00px;top:146.05px;white-space:pre;font-family:'Liberation Mono';font-size:11.67px;line-height:11.67px;color:#cc7832;">;</div>
<div class="a" style="left:401.00px;top:163.05px;white-space:pre;font-family:'Liberation Mono';font-size:11.67px;line-height:11.67px;color:#cc7832;">import </div>
<div class="a" style="left:450.00px;top:163.05px;white-space:pre;font-family:'Liberation Mono';font-size:11.67px;line-height:11.67px;color:#a9b7c6;">android.support.v7.app.AppCompatActivity</div>
<div class="a" style="left:730.00px;top:163.05px;white-space:pre;font-family:'Liberation Mono';font-size:11.67px;line-height:11.67px;color:#cc7832;">;</div>
<div class="a" style="left:401.00px;top:180.05px;white-space:pre;font-family:'Liberation Mono';font-size:11.67px;line-height:11.67px;color:#cc7832;">import </div>
<div class="a" style="left:450.00px;top:180.05px;white-space:pre;font-family:'Liberation Mono';font-size:11.67px;line-height:11.67px;color:#a9b7c6;">android.os.Bundle</div>
<div class="a" style="left:569.00px;top:180.05px;white-space:pre;font-family:'Liberation Mono';font-size:11.67px;line-height:11.67px;color:#cc7832;">;</div>
<div class="a" style="left:401.00px;top:197.05px;white-space:pre;font-family:'Liberation Mono';font-size:11.67px;line-height:11.67px;color:#cc7832;">import </div>
<div class="a" style="left:450.00px;top:197.05px;white-space:pre;font-family:'Liberation Mono';font-size:11.67px;line-height:11.67px;color:#a9b7c6;">android.view.View</div>
<div class="a" style="left:569.00px;top:197.05px;white-space:pre;font-family:'Liberation Mono';font-size:11.67px;line-height:11.67px;color:#cc7832;">;</div>
<div class="a" style="left:401.00px;top:214.05px;white-space:pre;font-family:'Liberation Mono';font-size:11.67px;line-height:11.67px;color:#cc7832;">import </div>
<div class="a" style="left:450.00px;top:214.05px;white-space:pre;font-family:'Liberation Mono';font-size:11.67px;line-height:11.67px;color:#a9b7c6;">android.widget.Button</div>
<div class="a" style="left:597.00px;top:214.05px;white-space:pre;font-family:'Liberation Mono';font-size:11.67px;line-height:11.67px;color:#cc7832;">;</div>
<div class="a" style="left:401.00px;top:265.05px;white-space:pre;font-family:'Liberation Mono';font-size:11.67px;line-height:11.67px;color:#cc7832;">public class </div>
<div class="a" style="left:492.00px;top:265.05px;white-space:pre;font-family:'Liberation Mono';font-size:11.67px;line-height:11.67px;color:#a9b7c6;">MainActivityPrincipal </div>
<div class="a" style="left:646.00px;top:265.05px;white-space:pre;font-family:'Liberation Mono';font-size:11.67px;line-height:11.67px;color:#cc7832;">extends </div>
<div class="a" style="left:702.00px;top:265.05px;white-space:pre;font-family:'Liberation Mono';font-size:11.67px;line-height:11.67px;color:#a9b7c6;">AppCompatActivity {</div>
<div class="a" style="left:429.00px;top:333.05px;white-space:pre;font-family:'Liberation Mono';font-size:11.67px;line-height:11.67px;color:#bbb529;">@Override</div>
<div class="a" style="left:429.00px;top:350.05px;white-space:pre;font-family:'Liberation Mono';font-size:11.67px;line-height:11.67px;color:#cc7832;">protected void </div>
<div class="a" style="left:534.00px;top:350.05px;white-space:pre;font-family:'Liberation Mono';font-size:11.67px;line-height:11.67px;color:#ffc66d;">onCreate</div>
<div class="a" style="left:590.00px;top:350.05px;white-space:pre;font-family:'Liberation Mono';font-size:11.67px;line-height:11.67px;color:#a9b7c6;">(Bundle savedInstanceState) {</div>
<div class="a" style="left:457.00px;top:367.05px;white-space:pre;font-family:'Liberation Mono';font-size:11.67px;line-height:11.67px;color:#cc7832;">super</div>
<div class="a" style="left:492.00px;top:367.05px;white-space:pre;font-family:'Liberation Mono';font-size:11.67px;line-height:11.67px;color:#a9b7c6;">.onCreate(savedInstanceState)</div>
<div class="a" style="left:695.00px;top:367.05px;white-space:pre;font-family:'Liberation Mono';font-size:11.67px;line-height:11.67px;color:#cc7832;">;</div>
<div class="a" style="left:457.00px;top:384.05px;white-space:pre;font-family:'Liberation Mono';font-size:11.67px;line-height:11.67px;color:#a9b7c6;">setContentView(R.layout.</div>
<div class="a" style="left:625.00px;top:384.05px;white-space:pre;font-family:'Liberation Mono';font-size:11.67px;line-height:11.67px;color:#9876aa;font-style:italic;">activity_main_principal</div>
<div class="a" style="left:786.00px;top:384.05px;white-space:pre;font-family:'Liberation Mono';font-size:11.67px;line-height:11.67px;color:#a9b7c6;">)</div>
<div class="a" style="left:793.00px;top:384.05px;white-space:pre;font-family:'Liberation Mono';font-size:11.67px;line-height:11.67px;color:#cc7832;">;</div>
<div class="a" style="left:457.00px;top:435.05px;white-space:pre;font-family:'Liberation Mono';font-size:11.67px;line-height:11.67px;color:#a9b7c6;">Button btnLogar = findViewById(R.id.</div>
<div class="a" style="left:709.00px;top:435.05px;white-space:pre;font-family:'Liberation Mono';font-size:11.67px;line-height:11.67px;color:#9876aa;font-style:italic;">btnEntrar</div>
<div class="a" style="left:772.00px;top:435.05px;white-space:pre;font-family:'Liberation Mono';font-size:11.67px;line-height:11.67px;color:#a9b7c6;">)</div>
<div class="a" style="left:779.00px;top:435.05px;white-space:pre;font-family:'Liberation Mono';font-size:11.67px;line-height:11.67px;color:#cc7832;">;</div>
<div class="a" style="left:450.00px;top:469.05px;white-space:pre;font-family:'Liberation Mono';font-size:11.67px;line-height:11.67px;color:#a9b7c6;">btnLogar.setOnClickListener(</div>
<div class="a" style="left:646.00px;top:469.05px;white-space:pre;font-family:'Liberation Mono';font-size:11.67px;line-height:11.67px;color:#cc7832;">new </div>
<div class="a" style="left:674.00px;top:469.05px;white-space:pre;font-family:'Liberation Mono';font-size:11.67px;line-height:11.67px;color:#a9b7c6;">View.OnClickListener() {</div>
<div class="a" style="left:485.00px;top:486.05px;white-space:pre;font-family:'Liberation Mono';font-size:11.67px;line-height:11.67px;color:#bbb529;">@Override</div>
<div class="a" style="left:485.00px;top:503.05px;white-space:pre;font-family:'Liberation Mono';font-size:11.67px;line-height:11.67px;color:#cc7832;">public void </div>
<div class="a" style="left:569.00px;top:503.05px;white-space:pre;font-family:'Liberation Mono';font-size:11.67px;line-height:11.67px;color:#ffc66d;">onClick</div>
<div class="a" style="left:618.00px;top:503.05px;white-space:pre;font-family:'Liberation Mono';font-size:11.67px;line-height:11.67px;color:#a9b7c6;">(View view) {</div>
<div class="a" style="left:513.00px;top:520.05px;white-space:pre;font-family:'Liberation Mono';font-size:11.67px;line-height:11.67px;color:#a9b7c6;">Intent intent = </div>
<div class="a" style="left:625.00px;top:520.05px;white-space:pre;font-family:'Liberation Mono';font-size:11.67px;line-height:11.67px;color:#cc7832;">new </div>
<div class="a" style="left:653.00px;top:520.05px;white-space:pre;font-family:'Liberation Mono';font-size:11.67px;line-height:11.67px;color:#a9b7c6;">Intent(</div>
<div class="a" style="left:513.00px;top:537.05px;white-space:pre;font-family:'Liberation Mono';font-size:11.67px;line-height:11.67px;color:#a9b7c6;">startActivity(intent)</div>
<div class="a" style="left:660.00px;top:537.05px;white-space:pre;font-family:'Liberation Mono';font-size:11.67px;line-height:11.67px;color:#cc7832;">;</div>
<div class="a" style="left:485.00px;top:554.05px;white-space:pre;font-family:'Liberation Mono';font-size:11.67px;line-height:11.67px;color:#a9b7c6;">}</div>
<div class="a" style="left:457.00px;top:571.05px;white-space:pre;font-family:'Liberation Mono';font-size:11.67px;line-height:11.67px;color:#a9b7c6;">})</div>
<div class="a" style="left:471.00px;top:571.05px;white-space:pre;font-family:'Liberation Mono';font-size:11.67px;line-height:11.67px;color:#cc7832;">;</div>
<div class="a" style="left:429.00px;top:605.05px;white-space:pre;font-family:'Liberation Mono';font-size:11.67px;line-height:11.67px;color:#a9b7c6;">}</div>
<div class="a" style="left:401.00px;top:673.05px;white-space:pre;font-family:'Liberation Mono';font-size:11.67px;line-height:11.67px;color:#a9b7c6;">}</div>
<div class="a" style="left:801.00px;top:520.05px;white-space:pre;font-family:'Liberation Mono';font-size:11.67px;line-height:11.67px;color:#a9b7c6;">MainActivityPrincipal</div>
<div class="a" style="left:948.00px;top:520.05px;white-space:pre;font-family:'Liberation Mono';font-size:11.67px;line-height:11.67px;color:#a9b7c6;">.</div>
<div class="a" style="left:955.00px;top:520.05px;white-space:pre;font-family:'Liberation Mono';font-size:11.67px;line-height:11.67px;color:#cc7832;">this</div>
<div class="a" style="left:983.00px;top:520.05px;white-space:pre;font-family:'Liberation Mono';font-size:11.67px;line-height:11.67px;color:#cc7832;">, </div>
<div class="a" style="left:997.00px;top:520.05px;white-space:pre;font-family:'Liberation Mono';font-size:11.67px;line-height:11.67px;color:#a9b7c6;">MainActivityLogin.</div>
<div class="a" style="left:1123.00px;top:520.05px;white-space:pre;font-family:'Liberation Mono';font-size:11.67px;line-height:11.67px;color:#cc7832;">class</div>
<div class="a" style="left:1158.00px;top:520.05px;white-space:pre;font-family:'Liberation Mono';font-size:11.67px;line-height:11.67px;color:#a9b7c6;">)</div>
<div class="a" style="left:1165.00px;top:520.05px;white-space:pre;font-family:'Liberation Mono';font-size:11.67px;line-height:11.67px;color:#cc7832;">;</div>
<div class="a" style="left:705px;top:518px;width:92px;height:13px;background:#333435;border-radius:3px"></div>
<div class="a" style="left:709.90px;top:518.34px;white-space:pre;font-family:'Liberation Sans';font-size:12px;line-height:12.0px;color:#787878;transform:scaleX(0.9482);transform-origin:0 0;">packageContext:</div>
<svg class="a" style="left:527px;top:444px" width="35" height="3" viewBox="0 0 35 3"><path d="M0 2.5l1.75 -2 l1.75 2l1.75 -2 l1.75 2l1.75 -2 l1.75 2l1.75 -2 l1.75 2l1.75 -2 l1.75 2l1.75 -2 l1.75 2l1.75 -2 l1.75 2l1.75 -2 l1.75 2l1.75 -2 l1.75 2l1.75 -2 l1.75 2" stroke="#6a8a6a" stroke-width="0.8" fill="none"/></svg>
<div class="a" style="left:431px;top:362px;width:1px;height:238px;background:#3a3a3a;"></div>
<div class="a" style="left:452px;top:481px;width:1px;height:119px;background:#3a3a3a;"></div>
<div class="a" style="left:452px;top:600px;width:1px;height:24px;background:#303030;"></div>
<div class="a" style="left:487px;top:515px;width:1px;height:34px;background:#3a3a3a;"></div>
<svg class="a" style="left:389.5px;top:146px" width="10" height="10" viewBox="0 0 10 10"><path d="M0.5 0.5h8v6.5l-4 2.8-4-2.8z" fill="#313335" stroke="#6f7173" stroke-width="1"/><path d="M2.5 4h4" stroke="#8a8c8e"/></svg>
<svg class="a" style="left:389.5px;top:213px" width="10" height="10" viewBox="0 0 10 10"><path d="M0.5 9.5h8V3L4.5 0.2 0.5 3z" fill="#313335" stroke="#6f7173" stroke-width="1"/><path d="M2.5 6h4" stroke="#8a8c8e"/></svg>
<svg class="a" style="left:389.5px;top:350px" width="10" height="10" viewBox="0 0 10 10"><path d="M0.5 0.5h8v6.5l-4 2.8-4-2.8z" fill="#313335" stroke="#6f7173" stroke-width="1"/><path d="M2.5 4h4" stroke="#8a8c8e"/></svg>
<svg class="a" style="left:389.5px;top:469px" width="10" height="10" viewBox="0 0 10 10"><path d="M0.5 0.5h8v6.5l-4 2.8-4-2.8z" fill="#313335" stroke="#6f7173" stroke-width="1"/><path d="M2.5 4h4" stroke="#8a8c8e"/></svg>
<svg class="a" style="left:389.5px;top:570px" width="10" height="10" viewBox="0 0 10 10"><path d="M0.5 9.5h8V3L4.5 0.2 0.5 3z" fill="#313335" stroke="#6f7173" stroke-width="1"/><path d="M2.5 6h4" stroke="#8a8c8e"/></svg>
<svg class="a" style="left:389.5px;top:604px" width="10" height="10" viewBox="0 0 10 10"><path d="M0.5 9.5h8V3L4.5 0.2 0.5 3z" fill="#313335" stroke="#6f7173" stroke-width="1"/><path d="M2.5 6h4" stroke="#8a8c8e"/></svg>
<svg class="a" style="left:365px;top:261px" width="16" height="15" viewBox="0 0 16 15"><path d="M7 0h5v7.2H2V5h5z" fill="#a6adb2"/><path d="M2 4.2L6.2 0v4.2z" fill="#b9bfc3"/><rect x="0" y="8" width="15" height="7" fill="#c9633a"/><path d="M5.2 9.3l-2.1 2.2 2.1 2.2M7.6 9.3l2.1 2.2-2.1 2.2" stroke="#4a1a08" stroke-width="1.3" fill="none"/></svg>
<svg class="a" style="left:364px;top:347px" width="14" height="13" viewBox="0 0 14 13"><circle cx="5" cy="7.5" r="4.2" fill="#7fc2e8"/><circle cx="5" cy="7.5" r="2.4" fill="#2b4a60"/><circle cx="5" cy="7.5" r="1.2" fill="#cfe8f7"/><path d="M10.5 12.5V1.5M8 4l2.5-3 2.5 3" stroke="#e8765a" stroke-width="1.3" fill="none"/></svg>
<svg class="a" style="left:364px;top:500px" width="14" height="13" viewBox="0 0 14 13"><circle cx="5" cy="7" r="4.4" fill="#59b56a"/><path d="M3.5 5h3M5 5v4M3.5 9h3" stroke="#1e3a22" stroke-width="1"/><path d="M10.5 12.5V1.5M8 4l2.5-3 2.5 3" stroke="#e8765a" stroke-width="1.3" fill="none"/></svg>
<svg class="a" style="left:1242.5px;top:109px" width="14" height="14" viewBox="0 0 14 14"><path d="M1.5 5l3.5 3.5L12.5 1" stroke="#5fb85f" stroke-width="2.6" fill="none"/><path d="M1 12l1.7-1.5 1.7 1.5 1.7-1.5 1.7 1.5 1.7-1.5 1.7 1.5 1.7-1.5" stroke="#5fb85f" stroke-width="0.9" fill="none"/></svg>
<svg class="a" style="left:31px;top:974px" width="14" height="14" viewBox="0 0 14 14"><circle cx="3.5" cy="3.5" r="3" fill="#eee"/><path d="M1.8 3.5h3.4" stroke="#555"/><circle cx="8" cy="7" r="3.5" fill="#e8b88a"/><path d="M4.5 6a3.5 3.5 0 0 1 7 0z" fill="#6d6f71"/><rect x="4.5" y="10.5" width="7" height="3.5" fill="#3fa0c8"/></svg>
<div class="a" style="left:48.10px;top:975.34px;white-space:pre;font-family:'Liberation Sans';font-size:12px;line-height:12.0px;color:#bbbbbb;transform:scaleX(0.9172);transform-origin:0 0;">TODO</div>
<svg class="a" style="left:100px;top:976px" width="11" height="10" viewBox="0 0 11 10"><path d="M0 1h10M0 5h7M0 9h10" stroke="#d0d0d0" stroke-width="1.8"/></svg>
<div class="a" style="left:116.70px;top:975.34px;white-space:pre;font-family:'Liberation Sans';font-size:12px;line-height:12.0px;color:#bbbbbb;transform:scaleX(0.9276);transform-origin:0 0;"><u>6</u>: Logcat</div>
<svg class="a" style="left:182px;top:974px" width="13" height="15" viewBox="0 0 13 15"><path d="M3 0v11" stroke="#4caf50" stroke-width="2"/><path d="M0 9l3 5 3-5z" fill="#4caf50"/><text x="7" y="5" font-size="5" fill="#ccc" font-family="Liberation Mono">01</text><text x="7" y="10" font-size="5" fill="#ccc" font-family="Liberation Mono">10</text></svg>
<div class="a" style="left:199.90px;top:975.34px;white-space:pre;font-family:'Liberation Sans';font-size:12px;line-height:12.0px;color:#bbbbbb;transform:scaleX(1.0155);transform-origin:0 0;">Build</div>
<svg class="a" style="left:246px;top:974px" width="13" height="13" viewBox="0 0 13 13"><rect x="0" y="0" width="13" height="13" fill="#111"/><rect x="0.5" y="0.5" width="12" height="12" fill="none" stroke="#bbb" stroke-width="1"/><path d="M3 4l2.5 2.5L3 9" stroke="#ddd" stroke-width="1.1" fill="none"/><path d="M6.5 9.5h3.5" stroke="#ddd" stroke-width="1.1"/></svg>
<div class="a" style="left:263.30px;top:975.34px;white-space:pre;font-family:'Liberation Sans';font-size:12px;line-height:12.0px;color:#bbbbbb;transform:scaleX(0.9700);transform-origin:0 0;">Terminal</div>
<svg class="a" style="left:1177px;top:973px" width="17" height="15" viewBox="0 0 17 15"><path d="M8.5 1a7.5 6 0 1 0 3 11.5l3.5 2-1-3.5A7.5 6 0 0 0 8.5 1z" fill="none" stroke="#a9abad" stroke-width="1.2"/></svg>
<div class="a" style="left:1197.60px;top:975.04px;white-space:pre;font-family:'Liberation Sans';font-size:12px;line-height:12.0px;color:#bbbbbb;transform:scaleX(0.9233);transform-origin:0 0;">Event Log</div>
<svg class="a" style="left:9px;top:996px" width="16" height="15" viewBox="0 0 16 15"><rect x="0.5" y="0.5" width="14" height="11" fill="#5a5c5e" stroke="#a9abad" stroke-width="1"/><path d="M0 14h15" stroke="#a9abad" stroke-width="1"/></svg>
<div class="a" style="left:32.70px;top:996.84px;white-space:pre;font-family:'Liberation Sans';font-size:12px;line-height:12.0px;color:#bbbbbb;transform:scaleX(0.9778);transform-origin:0 0;">Gradle sync finished in 10 s 661 ms (from cached state) (6 minutes ago)</div>
<div class="a" style="left:967.80px;top:997.34px;white-space:pre;font-family:'Liberation Sans';font-size:12px;line-height:12.0px;color:#bbbbbb;transform:scaleX(0.8904);transform-origin:0 0;">35:1</div>
<div class="a" style="left:1000.30px;top:997.34px;white-space:pre;font-family:'Liberation Sans';font-size:12px;line-height:12.0px;color:#bbbbbb;transform:scaleX(0.8136);transform-origin:0 0;">CRLF</div>
<svg class="a" style="left:1027px;top:999px" width="5" height="10" viewBox="0 0 5 10"><path d="M0 3.8h5L2.5 0.5zM0 6.2h5l-2.5 3.3z" fill="#bbb"/></svg>
<div class="a" style="left:1043.80px;top:997.34px;white-space:pre;font-family:'Liberation Sans';font-size:12px;line-height:12.0px;color:#bbbbbb;transform:scaleX(0.9118);transform-origin:0 0;">UTF-8</div>
<svg class="a" style="left:1075.5px;top:999px" width="5" height="10" viewBox="0 0 5 10"><path d="M0 3.8h5L2.5 0.5zM0 6.2h5l-2.5 3.3z" fill="#bbb"/></svg>
<div class="a" style="left:1091.10px;top:997.34px;white-space:pre;font-family:'Liberation Sans';font-size:12px;line-height:12.0px;color:#a5a5a5;transform:scaleX(1.0041);transform-origin:0 0;">Context: &lt;no context&gt;</div>
<svg class="a" style="left:1235px;top:998px" width="11" height="11" viewBox="0 0 11 11"><path d="M1.4 4.5V2.6a1.9 1.9 0 0 1 3.8 0V4" stroke="#c4c4c4" stroke-width="1.2" fill="none"/><rect x="3" y="4" width="7" height="6" rx="0.6" fill="#c4c4c4"/><path d="M5 6h3M6.5 6v3" stroke="#3d3e40" stroke-width="1"/></svg>
<svg class="a" style="left:1258px;top:996px" width="14" height="15" viewBox="0 0 14 15"><path d="M3 5.5V3.5a4 3.2 0 0 1 8 0v2" stroke="#b0b0b0" stroke-width="1.1" fill="none"/><path d="M0.5 5.5h13" stroke="#b0b0b0" stroke-width="1.2"/><path d="M2.5 6.5v3a4.5 4.5 0 0 0 9 0v-3" stroke="#b0b0b0" stroke-width="1.1" fill="none"/><path d="M4 8.5h2M8 8.5h2M4.5 11l2.5-1.2 2.5 1.2" stroke="#b0b0b0" stroke-width="1"/><path d="M2 14h10" stroke="#b0b0b0" stroke-width="1.1"/></svg>
</body></html>
